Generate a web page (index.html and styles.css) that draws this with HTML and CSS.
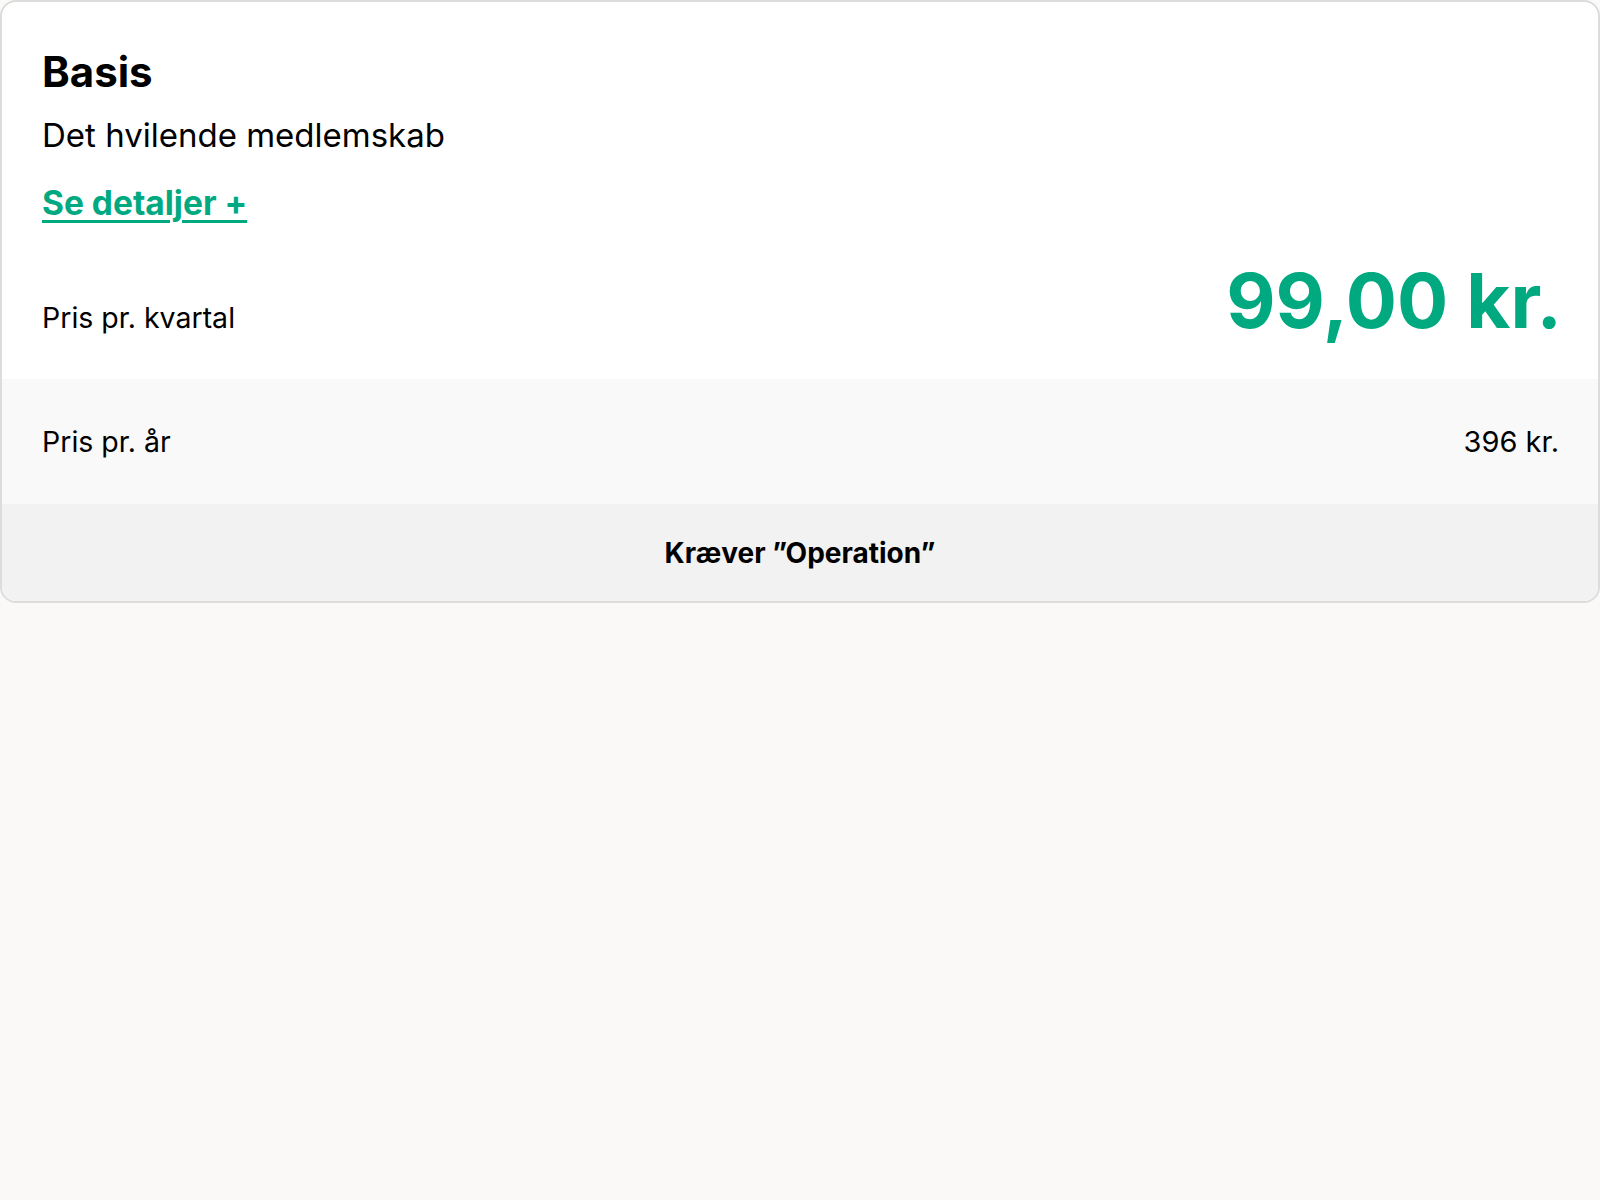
FILE: index.html
```html
<!DOCTYPE html>
<html lang="da">
<head>
<meta charset="utf-8">
<title>Basis</title>
<link rel="stylesheet" href="styles.css">
</head>
<body>
<div class="card">
  <div class="card-top">
    <h2 class="title">Basis</h2>
    <p class="subtitle">Det hvilende medlemskab</p>
    <a class="details" href="#">Se detaljer +</a>
    <div class="price-row">
      <span class="label">Pris pr. kvartal</span>
      <span class="price">99,00 kr.</span>
    </div>
  </div>
  <div class="card-year">
    <span class="label">Pris pr. år</span>
    <span class="year-value">396 kr.</span>
  </div>
  <div class="card-foot">Kræver ”Operation”</div>
</div>
</body>
</html>
```

FILE: styles.css
```css
html, body {
  margin: 0;
  padding: 0;
  background: #faf9f7;
  font-family: Inter, "Open Sans", sans-serif;
  color: #000;
}
.card {
  border: 2px solid #dcdcdc;
  border-radius: 16px;
  background: #fff;
  overflow: hidden;
}
.card-top {
  padding: 42px 40px 34px;
  display: flex;
  flex-direction: column;
}
.title {
  margin: 0;
  font-size: 42px;
  font-weight: 700;
  line-height: 56px;
}
.subtitle {
  margin: 11px 0 0;
  font-size: 33px;
  line-height: 48px;
}
.details {
  margin-top: 20px;
  font-size: 33.5px;
  font-weight: 700;
  color: #00a980;
  line-height: 48px;
  text-decoration: underline;
  text-decoration-thickness: 3px;
  text-underline-offset: 5px;
  align-self: flex-start;
}
.price-row {
  display: flex;
  justify-content: space-between;
  align-items: baseline;
  margin-top: 28px;
  height: 90px;
}
.label {
  font-size: 28.5px;
}
.price {
  font-size: 76px;
  font-weight: 700;
  line-height: 90px;
  color: #00a980;
  margin-right: -4px;
}
.card-year {
  background: #f9f9f9;
  padding: 0 40px;
  height: 125px;
  display: flex;
  justify-content: space-between;
  align-items: center;
}
.year-value {
  font-size: 29px;
  margin-right: -1px;
}
.card-foot {
  background: #f2f2f2;
  height: 97px;
  display: flex;
  align-items: center;
  justify-content: center;
  font-size: 28px;
  font-weight: 700;
}
```
